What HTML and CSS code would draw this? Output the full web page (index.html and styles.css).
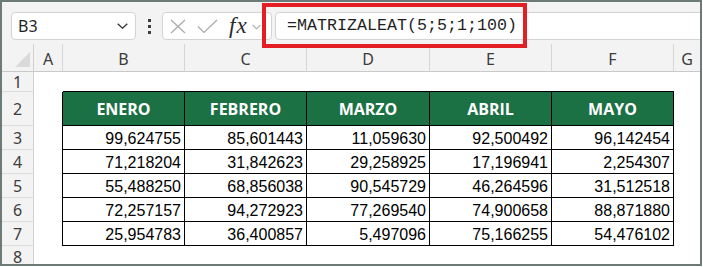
FILE: index.html
```html
<!DOCTYPE html>
<html lang="es">
<head>
<meta charset="utf-8">
<title>MATRIZALEAT</title>
<link rel="stylesheet" href="styles.css">
</head>
<body>
<div class="frame">
  <div class="toolbar">
    <div class="namebox">
      <span class="ref">B3</span>
      <svg class="nb-chev" width="11" height="6" viewBox="0 0 11 6"><polyline points="0.7,0.7 5.5,5.2 10.3,0.7" fill="none" stroke="#333" stroke-width="1.3"/></svg>
    </div>
    <div class="dots"><i></i><i></i><i></i></div>
    <div class="fxbox">
      <svg class="ic-x" width="16" height="15" viewBox="0 0 16 15"><path d="M1 1 L15 14 M15 1 L1 14" stroke="#a9a9a9" stroke-width="1.2" fill="none"/></svg>
      <svg class="ic-ok" width="21" height="15" viewBox="0 0 21 15"><polyline points="1,7.5 7,13.5 20,1" fill="none" stroke="#a9a9a9" stroke-width="1.2"/></svg>
      <span class="fx">fx</span>
      <svg class="fx-chev" width="9" height="6" viewBox="0 0 9 6"><polyline points="0.6,0.8 4.5,4.8 8.4,0.8" fill="none" stroke="#a9a9a9" stroke-width="1.1"/></svg>
    </div>
    <div class="formula">=MATRIZALEAT(5;5;1;100)</div>
  </div>

  <div class="sheet">
    <div class="row colhead">
      <div class="rh corner"><span class="tri"></span></div>
      <div class="ch ca">A</div>
      <div class="ch cb">B</div>
      <div class="ch cc">C</div>
      <div class="ch cd">D</div>
      <div class="ch ce">E</div>
      <div class="ch cf">F</div>
      <div class="ch cg">G</div>
    </div>

    <div class="row r1">
      <div class="rh">1</div>
      <div class="c ca"></div>
      <div class="c cb top"></div>
      <div class="c cc top"></div>
      <div class="c cd top"></div>
      <div class="c ce top"></div>
      <div class="c cf top"></div>
      <div class="c cg"></div>
    </div>

    <div class="row r2">
      <div class="rh">2</div>
      <div class="c ca edge"></div>
      <div class="c cb t hd">ENERO</div>
      <div class="c cc t hd">FEBRERO</div>
      <div class="c cd t hd">MARZO</div>
      <div class="c ce t hd">ABRIL</div>
      <div class="c cf t hd">MAYO</div>
      <div class="c cg"></div>
    </div>

    <div class="row rd">
      <div class="rh">3</div>
      <div class="c ca edge"></div>
      <div class="c cb t num">99,624755</div>
      <div class="c cc t num">85,601443</div>
      <div class="c cd t num">11,059630</div>
      <div class="c ce t num">92,500492</div>
      <div class="c cf t num">96,142454</div>
      <div class="c cg"></div>
    </div>

    <div class="row rd">
      <div class="rh">4</div>
      <div class="c ca edge"></div>
      <div class="c cb t num">71,218204</div>
      <div class="c cc t num">31,842623</div>
      <div class="c cd t num">29,258925</div>
      <div class="c ce t num">17,196941</div>
      <div class="c cf t num">2,254307</div>
      <div class="c cg"></div>
    </div>

    <div class="row rd">
      <div class="rh">5</div>
      <div class="c ca edge"></div>
      <div class="c cb t num">55,488250</div>
      <div class="c cc t num">68,856038</div>
      <div class="c cd t num">90,545729</div>
      <div class="c ce t num">46,264596</div>
      <div class="c cf t num">31,512518</div>
      <div class="c cg"></div>
    </div>

    <div class="row rd">
      <div class="rh">6</div>
      <div class="c ca edge"></div>
      <div class="c cb t num">72,257157</div>
      <div class="c cc t num">94,272923</div>
      <div class="c cd t num">77,269540</div>
      <div class="c ce t num">74,900658</div>
      <div class="c cf t num">88,871880</div>
      <div class="c cg"></div>
    </div>

    <div class="row rd">
      <div class="rh">7</div>
      <div class="c ca edge"></div>
      <div class="c cb t num">25,954783</div>
      <div class="c cc t num">36,400857</div>
      <div class="c cd t num">5,497096</div>
      <div class="c ce t num">75,166255</div>
      <div class="c cf t num">54,476102</div>
      <div class="c cg"></div>
    </div>

    <div class="row r8">
      <div class="rh rh8">8</div>
      <div class="c ca"></div>
      <div class="c cb"></div>
      <div class="c cc"></div>
      <div class="c cd"></div>
      <div class="c ce"></div>
      <div class="c cf"></div>
      <div class="c cg"></div>
    </div>
  </div>

  <div class="callout"></div>
</div>
</body>
</html>
```

FILE: styles.css
```css
* { box-sizing: border-box; }

html, body {
  margin: 0;
  padding: 0;
  background: #ffffff;
}

.frame {
  position: relative;
  width: 702px;
  height: 266px;
  border: 2px solid #6c7b77;
  overflow: hidden;
  background: #ffffff;
  font-family: "Noto Sans", "Open Sans", sans-serif;
}

/* ---------- toolbar / formula bar ---------- */
.toolbar {
  display: flex;
  align-items: flex-start;
  height: 42px;
  padding: 10px 0 0 9px;
  background: #f3f3f3;
}

.namebox {
  display: flex;
  align-items: center;
  justify-content: space-between;
  width: 125px;
  height: 28px;
  padding: 0 7px 0 6px;
  background: #ffffff;
  border: 1px solid #d3d3d3;
  border-radius: 4px;
}

.ref {
  font-size: 16px;
  color: #1f1f1f;
  line-height: 1;
  margin-top: -1px;
}

.dots {
  display: flex;
  flex-direction: column;
  gap: 3px;
  margin: 7px 0 0 12px;
  width: 3px;
}

.dots i {
  display: block;
  width: 3px;
  height: 3px;
  background: #3d3d3d;
}

.fxbox {
  display: flex;
  align-items: center;
  width: 110px;
  height: 28px;
  margin-left: 11px;
  padding-left: 7px;
  background: #ffffff;
  border: 1px solid #d3d3d3;
  border-radius: 4px;
}

.ic-ok { margin-left: 11px; }

.fx {
  margin-left: 11px;
  font-family: "Liberation Serif", "DejaVu Serif", serif;
  font-style: italic;
  font-size: 23px;
  line-height: 1;
  color: #2a2a2a;
  letter-spacing: 1px;
  margin-top: -2px;
}

.fx-chev { margin-left: 4px; margin-top: 1px; }

.formula {
  flex: 1;
  height: 28px;
  margin-left: 3px;
  margin-right: -8px;
  padding-left: 11px;
  background: #ffffff;
  border: 1px solid #d3d3d3;
  border-radius: 4px;
  font-family: "Liberation Mono", "DejaVu Sans Mono", monospace;
  font-size: 16.67px;
  line-height: 26px;
  color: #1f1f1f;
}

/* ---------- sheet ---------- */
.row { display: flex; }

.colhead {
  height: 28px;
  background: #f3f3f3;
}

.r1 { height: 20px; }
.r2 { height: 34px; }
.rd { height: 24px; }
.r8 { height: 18px; }

.rh {
  width: 32px;
  flex: none;
  display: flex;
  align-items: center;
  justify-content: center;
  background: #f3f3f3;
  border-right: 1px solid #cfcfcf;
  border-bottom: 1px solid #dcdcdc;
  font-size: 16px;
  color: #3c3c3c;
  padding-top: 1px;
}

.rh8 {
  align-items: flex-start;
  line-height: 14px;
  padding-top: 4px;
  border-bottom: none;
}

.corner {
  position: relative;
  border-bottom: 1px solid #c9c9c9;
}

.tri {
  position: absolute;
  right: 3px;
  bottom: 4px;
  width: 0;
  height: 0;
  border-left: 15px solid transparent;
  border-bottom: 15px solid #dadada;
}

.ch {
  flex: none;
  display: flex;
  align-items: center;
  justify-content: center;
  padding-top: 3px;
  border-right: 1px solid #d6d6d6;
  border-bottom: 1px solid #c9c9c9;
  font-size: 16px;
  color: #3c3c3c;
}

.ca { width: 29px; flex: none; }
.cb { width: 122px; flex: none; }
.cc { width: 122px; flex: none; }
.cd { width: 123px; flex: none; }
.ce { width: 122px; flex: none; }
.cf { width: 122px; flex: none; }
.cg { flex: 1; }
.ch.cg { border-right: none; }

.c { background: #ffffff; }

.top { border-bottom: 1px solid #000000; }
.edge { border-right: 1px solid #000000; }

.t {
  border-right: 1px solid #000000;
  border-bottom: 1px solid #000000;
}

.hd {
  display: flex;
  align-items: center;
  justify-content: center;
  background: #1b7044;
  color: #ffffff;
  font-family: "Open Sans", "Noto Sans", sans-serif;
  font-weight: 700;
  font-size: 16px;
  padding-top: 1px;
}

.num {
  display: flex;
  align-items: center;
  justify-content: flex-end;
  padding: 3px 3px 0 0;
  font-family: "Liberation Sans", Arial, sans-serif;
  font-size: 16px;
  color: #000000;
}

/* ---------- red annotation box ---------- */
.callout {
  position: absolute;
  left: 260px;
  top: 1px;
  width: 265px;
  height: 45px;
  border: 4px solid #e31e24;
}
```
